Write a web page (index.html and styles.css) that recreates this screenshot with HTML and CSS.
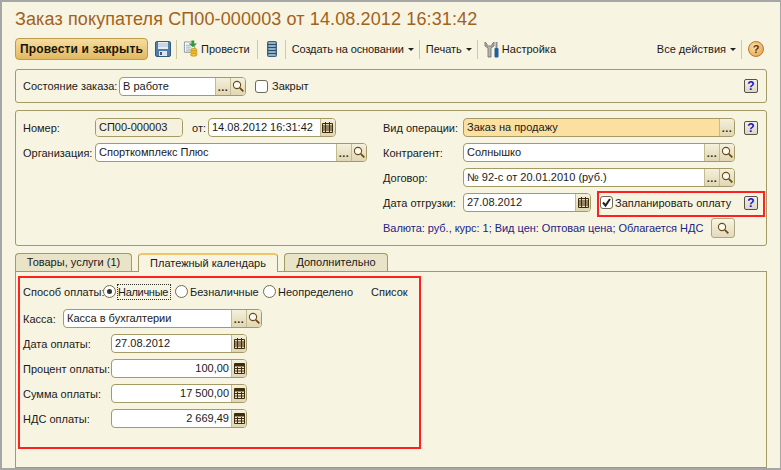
FILE: index.html
```html
<!DOCTYPE html>
<html lang="ru">
<head>
    <meta charset="UTF-8">
    <title>Заказ покупателя</title>
    <link rel="stylesheet" href="styles.css">
</head>
<body>
    <svg class="sprite" width="0" height="0">
        <symbol id="i-search" viewBox="0 0 13 13">
            <circle cx="5" cy="5" r="3.600" fill="#fdfbf0" stroke="#6a4c1a" stroke-width="1.100"/>
            <path d="M7.800 7.800l3.500 3.500" stroke="#6b4a12" stroke-width="1.800"/>
        </symbol>
        <symbol id="i-date" viewBox="0 0 13 13">
            <path d="M1.500 2.500h10v9h-10z" fill="#e9dcb8" stroke="#3e2c10"/>
            <path d="M1.500 5h10M1.500 7h10M1.500 9h10M4.500 1v11M8.500 1v11" stroke="#3e2c10"/>
        </symbol>
        <symbol id="i-calc" viewBox="0 0 13 13">
            <path d="M1.500 1.500h10v10h-10z" fill="#f0e6c8" stroke="#3e2c10"/>
            <path d="M2 2h9v2.500H2z" fill="#3e2c10"/>
            <path d="M1.500 6.500h10M1.500 9h10M4.500 5v6M8.500 5v6" stroke="#3e2c10"/>
        </symbol>
    </svg>

    <div class="window">
        <h1 class="title">Заказ покупателя СП00-000003 от 14.08.2012 16:31:42</h1>

        <div class="toolbar">
            <button class="btn-main">Провести и закрыть</button>
            <svg class="tool-icon save" width="16" height="16" viewBox="0 0 16 16">
                <rect x="0.500" y="0.500" width="15" height="15" rx="1.500" fill="#4f7fa8" stroke="#34597c"/>
                <rect x="3" y="1" width="10" height="7" fill="#e4edf4"/>
                <path d="M3 3h10M3 5h10" stroke="#a9c0d4"/>
                <rect x="4" y="10" width="8" height="5" fill="#dfe5ea"/>
                <rect x="5" y="11" width="2" height="3" fill="#34597c"/>
            </svg>
            <span class="sep"></span>
            <svg class="tool-icon" width="15" height="18" viewBox="0 0 16 18">
                <path d="M1.500 1.500h8l3 3v8h-11z" fill="#fff" stroke="#8a94a0"/>
                <path d="M3 5h5M3 7h6M3 9h5M3 11h5" stroke="#9aa7b5"/>
                <path d="M9 0h3v3h3l-4.500 4L6 3h3z" fill="#2f9a3a"/>
                <ellipse cx="11.500" cy="10" rx="3.500" ry="1.700" fill="#f2c230" stroke="#b07c10" stroke-width="0.600"/>
                <ellipse cx="11.500" cy="12.500" rx="3.500" ry="1.700" fill="#f2c230" stroke="#b07c10" stroke-width="0.600"/>
                <ellipse cx="11.500" cy="15" rx="3.500" ry="1.700" fill="#f2c230" stroke="#b07c10" stroke-width="0.600"/>
            </svg>
            <span class="tool-text">Провести</span>
            <span class="sep sep-post"></span>
            <svg class="tool-icon db" width="10" height="16" viewBox="0 0 10 16">
                <rect x="0.500" y="0.500" width="9" height="15" rx="1" fill="#6d93b4" stroke="#3f5f7c"/>
                <path d="M1 3.500h8M1 6.500h8M1 9.500h8M1 12.500h8" stroke="#2f4c66"/>
                <path d="M2 2h6M2 5h6M2 8h6M2 11h6M2 14h6" stroke="#b7cde0"/>
            </svg>
            <span class="sep sep-db"></span>
            <span class="tool-text t-create">Создать на основании</span><span class="arrow"></span>
            <span class="sep"></span>
            <span class="tool-text">Печать</span><span class="arrow"></span>
            <span class="sep"></span>
            <svg class="tool-icon" width="15" height="17" viewBox="0 0 15 17">
                <path d="M1 1v4l3 2v9h3V7l3-2V1L8 3v2H3V3z" fill="#b9b9b4" stroke="#6a6a66" stroke-width="0.800"/>
                <rect x="11.500" y="1" width="2" height="6" fill="#8a8f96"/>
                <rect x="10.500" y="7" width="4" height="9.500" rx="1" fill="#1f5f9e"/>
            </svg>
            <span class="tool-text">Настройка</span>
            <span class="tool-text all-actions">Все действия</span><span class="arrow"></span>
            <span class="sep"></span>
            <span class="help-round">?</span>
        </div>

        <div class="panel panel-state">
            <span class="lbl w-95">Состояние заказа:</span>
            <div class="field w-state">
                <span class="val">В работе</span>
                <span class="fbtn dots">...</span>
                <span class="fbtn"><svg width="13" height="13"><use href="#i-search"/></svg></span>
            </div>
            <label class="check closed"><span class="box"></span>Закрыт</label>
            <span class="help help-end">?</span>
        </div>

        <div class="panel panel-head">
            <div class="col-left">
                <div class="row">
                    <span class="lbl w-72">Номер:</span>
                    <div class="field w-num"><span class="val val-off">СП00-000003</span></div>
                    <span class="lbl from">от:</span>
                    <div class="field w-date">
                        <span class="val">14.08.2012 16:31:42</span>
                        <span class="fbtn"><svg width="13" height="13"><use href="#i-date"/></svg></span>
                    </div>
                </div>
                <div class="row">
                    <span class="lbl w-72">Организация:</span>
                    <div class="field w-org">
                        <span class="val">Спорткомплекс Плюс</span>
                        <span class="fbtn dots">...</span>
                        <span class="fbtn"><svg width="13" height="13"><use href="#i-search"/></svg></span>
                    </div>
                </div>
            </div>
            <div class="col-right">
                <div class="row">
                    <span class="lbl w-80">Вид операции:</span>
                    <div class="field w-wide field-req">
                        <span class="val">Заказ на продажу</span>
                        <span class="fbtn dots">...</span>
                    </div>
                    <span class="help help-end">?</span>
                </div>
                <div class="row">
                    <span class="lbl w-80">Контрагент:</span>
                    <div class="field w-wide">
                        <span class="val">Солнышко</span>
                        <span class="fbtn dots">...</span>
                        <span class="fbtn"><svg width="13" height="13"><use href="#i-search"/></svg></span>
                    </div>
                </div>
                <div class="row">
                    <span class="lbl w-80">Договор:</span>
                    <div class="field w-wide">
                        <span class="val">№ 92-с от 20.01.2010 (руб.)</span>
                        <span class="fbtn dots">...</span>
                        <span class="fbtn"><svg width="13" height="13"><use href="#i-search"/></svg></span>
                    </div>
                </div>
                <div class="row">
                    <span class="lbl w-80">Дата отгрузки:</span>
                    <div class="field w-ship">
                        <span class="val">27.08.2012</span>
                        <span class="fbtn"><svg width="13" height="13"><use href="#i-date"/></svg></span>
                    </div>
                    <label class="check plan"><span class="box"><svg width="11" height="11" viewBox="0 0 11 11"><path d="M2 5.500l2.500 3L9 2" fill="none" stroke="#222" stroke-width="2"/></svg></span>Запланировать оплату</label>
                    <span class="help help-end">?</span>
                </div>
                <div class="row row-info">
                    <span class="info">Валюта: руб., курс: 1; Вид цен: Оптовая цена; Облагается НДС</span>
                    <span class="btn-find"><svg width="13" height="13"><use href="#i-search"/></svg></span>
                </div>
            </div>
        </div>

        <div class="tabs">
            <span class="tab t-goods">Товары, услуги (1)</span>
            <span class="tab tab-on t-cal">Платежный календарь</span>
            <span class="tab t-more">Дополнительно</span>
        </div>
        <div class="tab-body">
            <div class="row row-pay">
                <span class="lbl w-80">Способ оплаты:</span>
                <span class="radio radio-on"></span><span class="opt opt-focus">Наличные</span>
                <span class="radio"></span><span class="opt o-cashless">Безналичные</span>
                <span class="radio"></span><span class="opt o-none">Неопределено</span>
                <span class="opt list">Список</span>
            </div>
            <div class="row">
                <span class="lbl w-40">Касса:</span>
                <div class="field w-cash">
                    <span class="val">Касса в бухгалтерии</span>
                    <span class="fbtn dots">...</span>
                    <span class="fbtn"><svg width="13" height="13"><use href="#i-search"/></svg></span>
                </div>
            </div>
            <div class="row">
                <span class="lbl w-88">Дата оплаты:</span>
                <div class="field w-pay">
                    <span class="val">27.08.2012</span>
                    <span class="fbtn"><svg width="13" height="13"><use href="#i-date"/></svg></span>
                </div>
            </div>
            <div class="row">
                <span class="lbl w-88">Процент оплаты:</span>
                <div class="field w-pay">
                    <span class="val val-num">100,00</span>
                    <span class="fbtn"><svg width="13" height="13"><use href="#i-calc"/></svg></span>
                </div>
            </div>
            <div class="row">
                <span class="lbl w-88">Сумма оплаты:</span>
                <div class="field w-pay">
                    <span class="val val-num">17 500,00</span>
                    <span class="fbtn"><svg width="13" height="13"><use href="#i-calc"/></svg></span>
                </div>
            </div>
            <div class="row">
                <span class="lbl w-88">НДС оплаты:</span>
                <div class="field w-pay">
                    <span class="val val-num">2 669,49</span>
                    <span class="fbtn"><svg width="13" height="13"><use href="#i-calc"/></svg></span>
                </div>
            </div>
        </div>
    </div>

    <!-- red annotation frames drawn over the form -->
    <div class="mark mark-plan"></div>
    <div class="mark mark-pay"></div>
</body>
</html>
```
FILE: styles.css
```css
body {
    margin: 0;
    font-family: "Liberation Sans", Arial, sans-serif;
    font-size: 11px;
    color: #1a1a1a;
}

.sprite {
    display: block;
    height: 0;
}

.window {
    box-sizing: border-box;
    width: 781px;
    height: 470px;
    padding: 0 13px;
    background-color: #f8f4e2;
    border-style: solid;
    border-color: #a6a6a6;
    border-width: 2px 1px 2px 2px;
    overflow: hidden;
}

.title {
    height: 36px;
    margin: 0;
    font-size: 18px;
    font-weight: normal;
    line-height: 35px;
    letter-spacing: 0.12px;
    color: #a1621c;
    white-space: nowrap;
}

/* toolbar */
.toolbar {
    display: flex;
    align-items: center;
    height: 22px;
    margin-bottom: 9px;
}

.btn-main {
    box-sizing: border-box;
    width: 133px;
    height: 22px;
    margin-right: 7px;
    padding: 0;
    font-family: inherit;
    font-size: 12px;
    font-weight: bold;
    letter-spacing: 0.15px;
    color: #1a1408;
    background: linear-gradient(#f5dd9f, #e2b860);
    border: 1px solid #c09a48;
    border-radius: 4px;
}

.tool-text {
    white-space: nowrap;
}

.t-create {
    letter-spacing: -0.1px;
}

.tool-icon {
    flex: none;
    margin-right: 3px;
}

.save {
    margin-right: 0;
}

.db {
    margin: 0 0 0 6px;
}

.sep {
    flex: none;
    width: 1px;
    height: 19px;
    margin: 0 6px 0 5px;
    background-color: #d2c8a0;
}

.sep-post {
    margin: 0 3px 0 7px;
}

.sep-db {
    margin-left: 8px;
}

.arrow {
    flex: none;
    width: 0;
    height: 0;
    margin-left: 4px;
    border-style: solid;
    border-width: 3px 3px 0;
    border-color: #222 transparent transparent;
}

.all-actions {
    margin-left: auto;
}

.help-round {
    box-sizing: border-box;
    flex: none;
    width: 16px;
    height: 16px;
    margin-right: 3px;
    font-weight: bold;
    line-height: 14px;
    text-align: center;
    color: #5a3408;
    background: radial-gradient(circle at 40% 35%, #fbe0a8, #e8983a);
    border: 1px solid #b87a30;
    border-radius: 50%;
}

/* panels */
.panel {
    box-sizing: border-box;
    background-color: #f8f4e2;
    border: 1px solid #a39a66;
    border-radius: 3px;
}

.panel-state {
    display: flex;
    align-items: center;
    height: 34px;
    margin-bottom: 7px;
    padding: 0 8px 0 7px;
}

.panel-head {
    display: flex;
    height: 136px;
    margin-bottom: 7px;
    padding: 7px 8px 0 7px;
}

.col-left {
    flex: none;
    width: 360px;
}

.col-right {
    flex: 1;
}

.row {
    display: flex;
    align-items: center;
    height: 19px;
    margin-bottom: 6px;
}

.row-info {
    height: 20px;
}

.lbl {
    flex: none;
    white-space: nowrap;
}

.w-40 { width: 40px; }
.w-72 { width: 72px; }
.w-80 { width: 80px; }
.w-88 { width: 88px; }
.w-95 { width: 96px; }

.from {
    margin: 0 2px 0 9px;
}

/* input fields */
.field {
    box-sizing: border-box;
    flex: none;
    display: flex;
    height: 19px;
    background-color: #fff;
    border: 1px solid #a39a66;
    border-radius: 4px;
    overflow: hidden;
}

.w-state { width: 127px; }
.w-num { width: 88px; }
.w-date { width: 128px; }
.w-org { width: 272px; }
.w-wide { width: 272px; }
.w-ship { width: 128px; }
.w-cash { width: 199px; }
.w-pay { width: 136px; }

.field-req {
    background-color: #fce0a0;
}

.val {
    flex: 1;
    padding: 0 2px 0 3px;
    line-height: 17px;
    white-space: nowrap;
}

.val-off {
    background-color: #f6f1dc;
}

.val-num {
    text-align: right;
}

.fbtn {
    flex: none;
    display: flex;
    align-items: center;
    justify-content: center;
    box-sizing: border-box;
    width: 15px;
    background: linear-gradient(#f5f0dc, #dfd7b4);
    border-left: 1px solid #c4bb90;
}

.dots {
    align-items: flex-end;
    font-weight: bold;
    line-height: 15px;
    letter-spacing: 0.5px;
    color: #3a2c10;
}

/* help square */
.help {
    box-sizing: border-box;
    flex: none;
    width: 14px;
    height: 14px;
    font-size: 12px;
    font-weight: bold;
    line-height: 12px;
    text-align: center;
    color: #1414c8;
    background: linear-gradient(#f4f1e4, #dcd8c4);
    border: 1px solid #55524a;
    border-radius: 2px;
}

.help-end {
    margin-left: auto;
}

/* check boxes and radios */
.check {
    display: flex;
    align-items: center;
    white-space: nowrap;
}

.box {
    box-sizing: border-box;
    display: flex;
    align-items: center;
    justify-content: center;
    width: 13px;
    height: 13px;
    margin-right: 4px;
    background-color: #fff;
    border: 1px solid #6f6a58;
    border-radius: 3px;
}

.closed {
    margin-left: 9px;
}

.plan {
    margin-left: 9px;
}

.plan .box {
    margin-right: 2px;
}

.info {
    flex: 1;
    letter-spacing: -0.03px;
    color: #1c2484;
    white-space: nowrap;
}

.btn-find {
    box-sizing: border-box;
    flex: none;
    display: flex;
    align-items: center;
    justify-content: center;
    width: 24px;
    height: 20px;
    margin-right: 23px;
    background: linear-gradient(#f8f4e4, #e2dabc);
    border: 1px solid #b0a67c;
    border-radius: 3px;
}

/* tabs */
.tabs {
    display: flex;
    height: 18px;
    gap: 6px;
}

.tab {
    box-sizing: border-box;
    height: 18px;
    line-height: 17px;
    text-align: center;
    white-space: nowrap;
    background-color: #e9e3c8;
    border: 1px solid #a39a66;
    border-bottom: none;
    border-radius: 4px 4px 0 0;
}

.tab-on {
    position: relative;
    z-index: 1;
    height: 19px;
    background-color: #f8f4e2;
    border-top: 2px solid #f0c468;
}

.t-goods { width: 117px; }
.t-cal { width: 140px; }
.t-more { width: 104px; }

.tab-body {
    box-sizing: border-box;
    height: 197px;
    padding: 10px 7px 0;
    background-color: #f8f4e2;
    border: 1px solid #a39a66;
}

.row-pay {
    margin-bottom: 8px;
}

.radio {
    box-sizing: border-box;
    flex: none;
    display: flex;
    align-items: center;
    justify-content: center;
    width: 13px;
    height: 13px;
    margin: 0 2px 0 5px;
    background-color: #fff;
    border: 1px solid #6f6a58;
    border-radius: 50%;
}

.radio-on {
    margin-left: 0;
}

.radio-on::after {
    content: "";
    width: 5px;
    height: 5px;
    background-color: #333;
    border-radius: 50%;
}

.opt {
    white-space: nowrap;
}

.opt-focus {
    width: 52px;
    line-height: 14px;
    letter-spacing: -0.3px;
    outline: 1px dotted #333;
}

.o-cashless {
    width: 68px;
}

.o-none {
    width: 74px;
}

.list {
    margin-left: 19px;
}

/* red frames */
.mark {
    position: absolute;
    box-sizing: border-box;
    border: 2px solid #ff2020;
}

.mark-plan {
    left: 597px;
    top: 191px;
    width: 168px;
    height: 26px;
}

.mark-pay {
    left: 18px;
    top: 276px;
    width: 403px;
    height: 173px;
}
```
